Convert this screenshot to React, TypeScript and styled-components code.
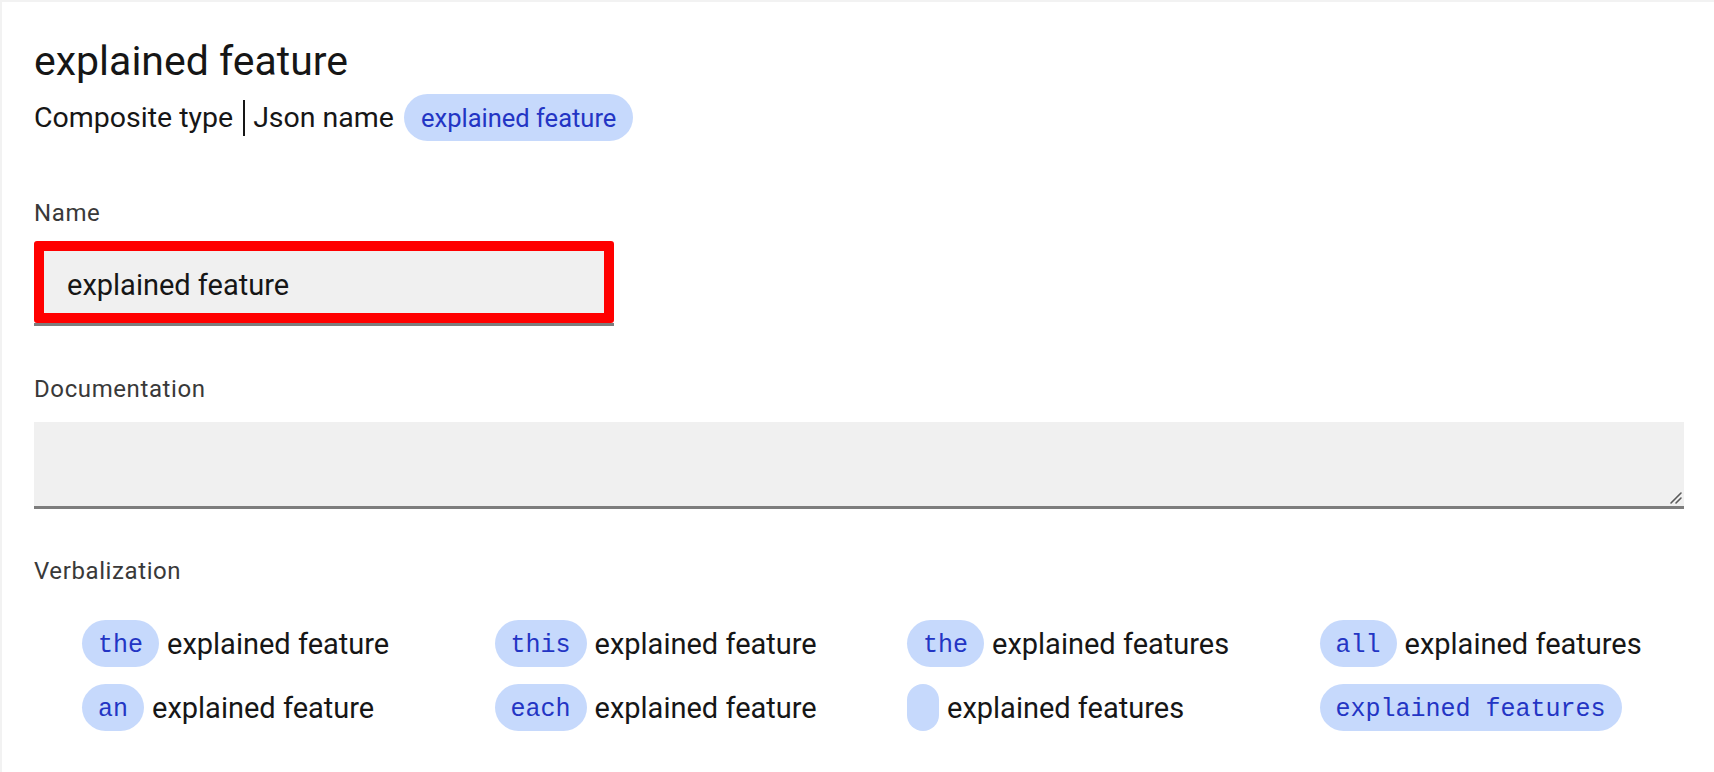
import React from "react";
import styled, { createGlobalStyle } from "styled-components";

const GlobalStyle = createGlobalStyle`
  html, body {
    margin: 0;
    padding: 0;
    background: #ffffff;
  }
  body {
    font-family: Roboto, "Noto Sans", "Liberation Sans", sans-serif;
    color: #161616;
  }
  * { box-sizing: border-box; }
`;

const Panel = styled.main`
  min-height: 100vh;
  border-top: 2px solid #f2f2f2;
  border-left: 2px solid #f2f2f2;
  padding: 34px 30px 0 32px;
  display: flex;
  flex-direction: column;
`;

const Title = styled.h1`
  margin: 0;
  font-size: 41px;
  font-weight: 400;
  line-height: 50px;
  color: #161616;
`;

const Meta = styled.div`
  margin-top: 8px;
  display: flex;
  align-items: center;
  height: 47px;
  font-size: 28.5px;
  color: #161616;
`;

const Divider = styled.span`
  width: 2px;
  height: 36px;
  background: #161616;
  margin: 0 8px 0 10px;
`;

const Tag = styled.span`
  display: inline-flex;
  align-items: center;
  height: 47px;
  padding: 0 17px;
  margin-left: 10px;
  border-radius: 24px;
  background: #c6d9fc;
  color: #2335c4;
  font-size: 25.5px;
`;

const Field = styled.section<{ $top: number; $gap: number }>`
  margin-top: ${(p) => p.$top}px;
  display: flex;
  flex-direction: column;
  gap: ${(p) => p.$gap}px;
`;

const Label = styled.label`
  font-size: 24px;
  line-height: 32px;
  letter-spacing: 0.6px;
  color: #393939;
`;

const NameFrame = styled.div`
  width: 580px;
  border-bottom: 3px solid #7d7d7d;
`;

const NameInput = styled.input`
  display: block;
  width: 100%;
  height: 82px;
  border: 10px solid #ff0000;
  border-radius: 3px;
  background: #f0f0f0;
  padding: 6px 0 0 23px;
  font-family: inherit;
  font-size: 29px;
  color: #161616;
  outline: none;
`;

const DocWrap = styled.div`
  position: relative;
`;

const DocArea = styled.textarea`
  display: block;
  width: 100%;
  height: 87px;
  border: none;
  border-bottom: 3px solid #7d7d7d;
  background: #f0f0f0;
  resize: none;
  padding: 14px 24px;
  font-family: inherit;
  font-size: 29px;
  outline: none;
`;

const Grip = styled.svg`
  position: absolute;
  right: 1px;
  bottom: 4px;
  width: 15px;
  height: 15px;
  pointer-events: none;
`;

const VerbGrid = styled.div`
  display: grid;
  grid-template-columns: repeat(4, 1fr);
  column-gap: 48px;
  row-gap: 17px;
  padding-left: 48px;
`;

const VerbItem = styled.div`
  display: flex;
  align-items: center;
  gap: 8px;
  font-size: 29px;
  color: #161616;
  white-space: nowrap;
`;

const Chip = styled.span`
  display: inline-flex;
  align-items: center;
  height: 47px;
  min-width: 32px;
  padding: 3px 16px 0;
  border-radius: 24px;
  background: #c6d9fc;
  color: #2335c4;
  font-family: "Liberation Mono", "DejaVu Sans Mono", monospace;
  font-size: 25px;
  white-space: pre;
`;

const verbs: { chip: string; text: string }[] = [
  { chip: "the", text: "explained feature" },
  { chip: "this", text: "explained feature" },
  { chip: "the", text: "explained features" },
  { chip: "all", text: "explained features" },
  { chip: "an", text: "explained feature" },
  { chip: "each", text: "explained feature" },
  { chip: "", text: "explained features" },
  { chip: "explained features", text: "" },
];

export default function App() {
  return (
    <>
      <GlobalStyle />
      <Panel>
        <Title>explained feature</Title>
        <Meta>
          <span>Composite type</span>
          <Divider />
          <span>Json name</span>
          <Tag>explained feature</Tag>
        </Meta>

        <Field $top={56} $gap={12}>
          <Label>Name</Label>
          <NameFrame>
            <NameInput defaultValue="explained feature" readOnly />
          </NameFrame>
        </Field>

        <Field $top={47} $gap={17}>
          <Label>Documentation</Label>
          <DocWrap>
            <DocArea />
            <Grip viewBox="0 0 15 15">
              <path d="M3 13 L13 3 M8 13 L13 8" stroke="#5a5a5a" strokeWidth="1.6" strokeLinecap="round" />
            </Grip>
          </DocWrap>
        </Field>

        <Field $top={46} $gap={33}>
          <Label>Verbalization</Label>
          <VerbGrid>
            {verbs.map((v, i) => (
              <VerbItem key={i}>
                <Chip>{v.chip}</Chip>
                {v.text && <span>{v.text}</span>}
              </VerbItem>
            ))}
          </VerbGrid>
        </Field>
      </Panel>
    </>
  );
}
